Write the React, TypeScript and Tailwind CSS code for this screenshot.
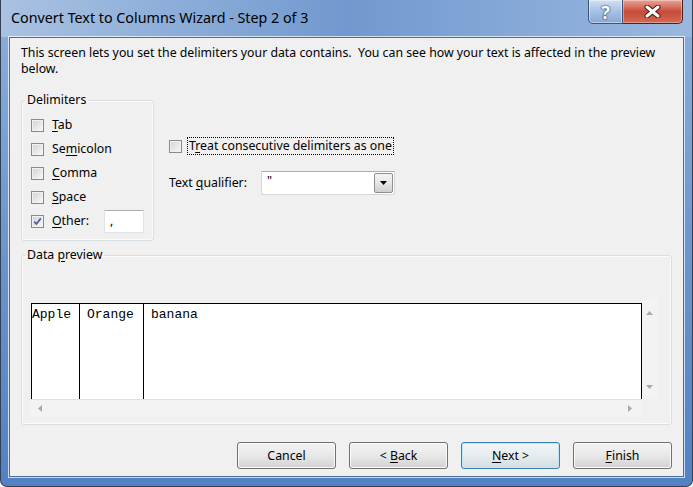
import React from 'react';

function Key({ children }: { children: React.ReactNode }) {
  return <span className="underline underline-offset-[2px] decoration-[1px]">{children}</span>;
}

function CheckBox({ checked = false }: { checked?: boolean }) {
  return (
    <span className="flex h-[13px] w-[13px] shrink-0 items-center justify-center border border-[#8a8a8a] bg-gradient-to-br from-[#d2d2d2] to-[#fafafa] shadow-[inset_0_0_0_1px_#f1f1f1]">
      {checked && (
        <svg width="9" height="9" viewBox="0 0 9 9">
          <path d="M1.2 4.6 L3.4 7 L7.8 1.4" fill="none" stroke="#4a5f9b" strokeWidth="1.7" />
        </svg>
      )}
    </span>
  );
}

function DelimRow({ checked, children }: { checked?: boolean; children: React.ReactNode }) {
  return (
    <div className="flex h-[24px] items-center">
      <CheckBox checked={checked} />
      <div className="ml-[8px] flex items-center">{children}</div>
    </div>
  );
}

function Arrow({ dir }: { dir: 'up' | 'down' | 'left' | 'right' }) {
  const d = {
    up: 'M0 4 L3.5 0 L7 4 Z',
    down: 'M0 0 L7 0 L3.5 4 Z',
    left: 'M4 0 L4 7 L0 3.5 Z',
    right: 'M0 0 L4 3.5 L0 7 Z',
  }[dir];
  const vertical = dir === 'up' || dir === 'down';
  return (
    <svg width={vertical ? 7 : 4} height={vertical ? 4 : 7} viewBox={vertical ? '0 0 7 4' : '0 0 4 7'}>
      <path d={d} fill="#a9a9a9" />
    </svg>
  );
}

function Button({ children, primary }: { children: React.ReactNode; primary?: boolean }) {
  return (
    <button
      className={`flex h-[27px] w-[99px] items-center justify-center rounded-[3px] border bg-gradient-to-b text-[12.3px] leading-[16px] text-black ${
        primary
          ? 'border-[#3c7fb1] from-[#f1f5f7] via-[#e6ecef] to-[#d3dde2] shadow-[inset_0_0_0_1px_#bfe6f8]'
          : 'border-[#707070] from-[#f3f3f3] via-[#e8e8e8] to-[#d2d2d2] shadow-[inset_0_0_0_1px_#fbfbfb]'
      }`}
    >
      <span className="whitespace-pre">{children}</span>
    </button>
  );
}

function TitleBar() {
  return (
    <div className="flex h-[37px] shrink-0 bg-gradient-to-r from-[#a9c2e2] via-[#7199cf] to-[#9ab8df]">
      <div className="pl-[10px] pt-[8px] text-[14.3px] leading-[20px] text-black">
        Convert Text to Columns Wizard - Step 2 of 3
      </div>
      <div className="ml-auto mr-[9px] flex h-[24px]">
        <div className="flex w-[35px] items-center justify-center rounded-bl-[5px] border border-t-0 border-[#3b5478] bg-gradient-to-b from-[#d2e0f2] via-[#a6c1e5] to-[#87a8d6] shadow-[inset_0_0_0_1px_rgba(255,255,255,0.45)]">
          <span className="text-[18px] font-bold leading-[20px] text-white [text-shadow:0_0_2px_#1c3357,0_0_1px_#1c3357]">?</span>
        </div>
        <div className="flex w-[60px] items-center justify-center rounded-br-[5px] border border-l-0 border-t-0 border-[#5a1c18] bg-gradient-to-b from-[#e8a497] via-[#c74b3a] to-[#d26a52] shadow-[inset_0_0_0_1px_rgba(255,255,255,0.35)]">
          <svg width="17" height="13" viewBox="0 0 17 13">
            <path d="M3 2 L14 11 M14 2 L3 11" stroke="#4a1410" strokeWidth="5" strokeLinecap="round" />
            <path d="M3 2 L14 11 M14 2 L3 11" stroke="#ffffff" strokeWidth="3" strokeLinecap="round" />
          </svg>
        </div>
      </div>
    </div>
  );
}

export default function App() {
  return (
    <div className="flex h-[487px] w-[693px] flex-col overflow-hidden rounded-b-[7px] border-x border-b border-[#34404f] bg-gradient-to-b from-[#8cb0dd] via-[#6b96ce] to-[#5282c4] font-['Noto_Sans',sans-serif] text-[12.3px] text-black">
      <TitleBar />

      <div className="mx-[8px] flex flex-1 flex-col border border-[#4d6c96] bg-[#f0f0f0] px-[11px] pt-[7px] shadow-[0_0_0_1px_rgba(255,255,255,0.7)]">
        <p className="pr-[2px] leading-[16px]">
          This screen lets you set the delimiters your data contains.&nbsp; You can see how your text is affected in the preview below.
        </p>

        <div className="mt-[15px] flex items-start">
          <fieldset className="w-[133px] rounded-[3px] border border-[#d5dfe5] shadow-[inset_0_0_0_1px_#fbfbfb]">
            <legend className="ml-[3px] px-[2px] leading-[16px]">Delimiters</legend>
            <div className="pb-[7px] pl-[9px] pt-[5px]">
              <DelimRow>
                <span><Key>T</Key>ab</span>
              </DelimRow>
              <DelimRow>
                <span>Se<Key>m</Key>icolon</span>
              </DelimRow>
              <DelimRow>
                <span><Key>C</Key>omma</span>
              </DelimRow>
              <DelimRow>
                <span><Key>S</Key>pace</span>
              </DelimRow>
              <DelimRow checked>
                <span className="w-[52px]"><Key>O</Key>ther:</span>
                <div className="h-[23px] w-[40px] border border-[#e2e3ea] border-t-[#abadb3] bg-white pl-[5px] leading-[20px]">,</div>
              </DelimRow>
            </div>
          </fieldset>

          <div className="ml-[15px] pt-[45px]">
            <div className="flex h-[18px] items-center">
              <CheckBox />
              <span className="ml-[5px] border border-dotted border-black px-[1px] leading-[16px]">
                T<Key>r</Key>eat consecutive delimiters as one
              </span>
            </div>
            <div className="mt-[16px] flex h-[24px] items-center">
              <span className="w-[92px]">Text <Key>q</Key>ualifier:</span>
              <div className="flex h-[24px] w-[134px] border border-[#d5d7de] border-t-[#abadb3] bg-white">
                <span className="flex-1 pl-[5px] leading-[18px]">"</span>
                <div className="mr-[1px] mt-[1px] flex h-[20px] w-[19px] items-center justify-center rounded-[2px] border border-[#8e8f8f] bg-gradient-to-b from-[#f4f4f4] via-[#e6e6e6] to-[#cfcfcf]">
                  <svg width="7" height="4" viewBox="0 0 7 4">
                    <path d="M0 0 L7 0 L3.5 4 Z" fill="#000" />
                  </svg>
                </div>
              </div>
            </div>
          </div>
        </div>

        <fieldset className="mt-[6px] rounded-[3px] border border-[#d5dfe5] shadow-[inset_0_0_0_1px_#fbfbfb]">
          <legend className="ml-[3px] px-[2px] leading-[16px]">
            Data <Key>p</Key>review
          </legend>
          <div className="grid grid-cols-[611px_15px] grid-rows-[6px_96px_18px] pb-[7px] pl-[9px] pt-[34px]">
            <div className="col-start-1 row-start-2 flex border-x border-t border-black bg-white font-['Liberation_Mono',monospace] text-[13px] leading-[16px]">
              <div className="w-[48px] border-r border-black pt-[3px]">Apple</div>
              <div className="w-[64px] border-r border-black pl-[7px] pt-[3px]">Orange</div>
              <div className="flex-1 pl-[7px] pt-[3px]">banana</div>
            </div>
            <div className="col-start-2 row-span-2 row-start-1 flex flex-col items-center justify-between bg-[#f3f3f3] pb-[10px] pt-[14px]">
              <Arrow dir="up" />
              <Arrow dir="down" />
            </div>
            <div className="col-start-1 row-start-3 flex items-center justify-between border-t border-[#e2e2e2] bg-[#f3f3f3] pl-[7px] pr-[10px]">
              <Arrow dir="left" />
              <Arrow dir="right" />
            </div>
          </div>
        </fieldset>

        <div className="mt-[17px] flex justify-end gap-[13px]">
          <Button>Cancel</Button>
          <Button>
            {'< '}<Key>B</Key>ack
          </Button>
          <Button primary>
            <Key>N</Key>ext {'>'}
          </Button>
          <Button>
            <Key>F</Key>inish
          </Button>
        </div>
      </div>

      <div className="h-[9px] shrink-0" />
    </div>
  );
}
